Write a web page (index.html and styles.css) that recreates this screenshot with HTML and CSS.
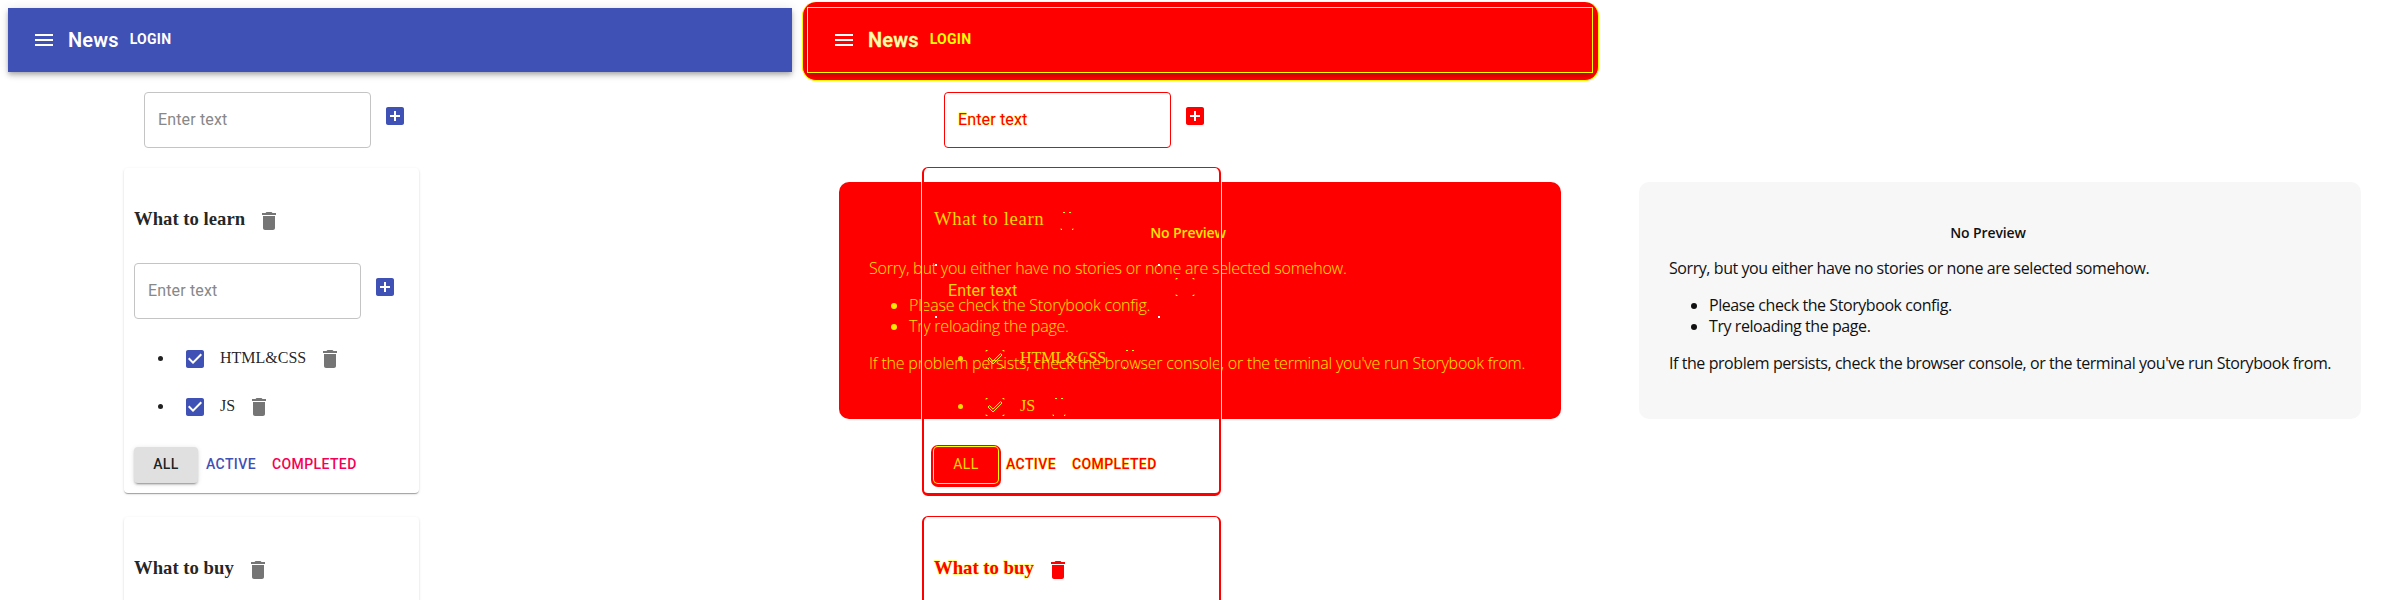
FILE: index.html
```html
<!DOCTYPE html>
<html lang="en">
<head>
<meta charset="utf-8">
<title>Todolists</title>
<link rel="stylesheet" href="styles.css">
</head>
<body>
<svg class="sprite" aria-hidden="true">
  <symbol id="menu" viewBox="0 0 24 24"><path d="M3 18h18v-2H3v2zm0-5h18v-2H3v2zm0-7v2h18V6H3z"/></symbol>
  <symbol id="add" viewBox="0 0 24 24"><path d="M19 3H5c-1.11 0-2 .9-2 2v14c0 1.1.89 2 2 2h14c1.1 0 2-.9 2-2V5c0-1.1-.9-2-2-2zm-2 10h-4v4h-2v-4H7v-2h4V7h2v4h4v2z"/></symbol>
  <symbol id="trash" viewBox="0 0 24 24"><path d="M6 19c0 1.100.9 2 2 2h8c1.100 0 2-.9 2-2V7H6v12zM19 4h-3.500l-1-1h-5l-1 1H5v2h14V4z"/></symbol>
  <symbol id="check" viewBox="0 0 24 24"><path d="M19 3H5c-1.110 0-2 .9-2 2v14c0 1.100.89 2 2 2h14c1.110 0 2-.9 2-2V5c0-1.100-.89-2-2-2zm-9 14l-5-5 1.410-1.410L10 14.170l7.590-7.590L19 8l-9 9z"/></symbol>
  <symbol id="trash-diff" viewBox="0 0 24 24"><path d="M8 3.500h2m4 0h2M6 19.500v1h1m10 0h1v-1"/></symbol>
  <symbol id="add-diff" viewBox="0 0 24 24"><path d="M3 4.500v-1h1.500m15 0H21v1M3 19.500v1h1.500m15 0H21v-1"/></symbol>
  <symbol id="check-diff" viewBox="0 0 24 24"><path d="M3 4.500v-1h1.500m15 0H21v1M3 19.500v1h1.500m15 0H21v-1M10 17l-5-5 1.410-1.410L10 14.170l7.590-7.590L19 8z"/></symbol>
</svg>
<main class="compare">
  <section class="panel">
    <div class="app">
      <header class="bar">
        <span class="icon-btn"><svg><use href="#menu"/></svg></span>
        <span class="title">News</span>
        <span class="btn login">Login</span>
      </header>
      <div class="add-form top-form"><div class="field">Enter text</div><span class="icon-btn primary"><svg><use href="#add"/></svg></span></div>
      <article class="card">
        <h3>What to learn<span class="icon-btn"><svg><use href="#trash"/></svg></span></h3>
        <div class="add-form"><div class="field">Enter text</div><span class="icon-btn primary"><svg><use href="#add"/></svg></span></div>
        <ul class="tasks">
          <li><span class="check primary"><svg><use href="#check"/></svg></span> <span>HTML&amp;CSS</span><span class="icon-btn"><svg><use href="#trash"/></svg></span></li>
          <li><span class="check primary"><svg><use href="#check"/></svg></span> <span>JS</span><span class="icon-btn"><svg><use href="#trash"/></svg></span></li>
        </ul>
        <div class="filters"><span class="btn all">All</span><span class="btn active">Active</span><span class="btn completed">Completed</span></div>
      </article>
      <article class="card">
        <h3>What to buy<span class="icon-btn"><svg><use href="#trash"/></svg></span></h3>
      </article>
    </div>
  </section>

  <section class="panel diff">
    <div class="layer">
      <div class="preview">
        <h1>No Preview</h1>
        <p><span class="sorry">Sorry, but you either have no stories or none are selected somehow.</span></p>
        <ul><li>Please check the Storybook config.</li><li>Try reloading the page.</li></ul>
        <p><span class="persist">If the problem persists, check the browser console, or the terminal you've run Storybook from.</span></p>
      </div>
    </div>
    <div class="app">
      <header class="bar">
        <span class="icon-btn"><svg><use href="#menu"/></svg></span>
        <span class="title">News</span>
        <span class="btn login">Login</span>
      </header>
      <div class="add-form top-form"><div class="field">Enter text</div><span class="icon-btn"><svg><use href="#add"/></svg></span></div>
      <article class="card crossing">
        <h3>What to learn<span class="icon-btn edge"><svg><use href="#trash-diff"/></svg></span></h3>
        <div class="add-form"><div class="field covered">Enter text</div><span class="icon-btn edge"><svg><use href="#add-diff"/></svg></span></div>
        <ul class="tasks">
          <li><span class="check edge"><svg><use href="#check-diff"/></svg></span> <span>HTML&amp;CSS</span><span class="icon-btn edge"><svg><use href="#trash-diff"/></svg></span></li>
          <li><span class="check edge"><svg><use href="#check-diff"/></svg></span> <span>JS</span><span class="icon-btn edge"><svg><use href="#trash-diff"/></svg></span></li>
        </ul>
        <div class="filters"><span class="btn all">All</span><span class="btn active">Active</span><span class="btn completed">Completed</span></div>
      </article>
      <article class="card">
        <h3>What to buy<span class="icon-btn"><svg><use href="#trash"/></svg></span></h3>
      </article>
    </div>
  </section>

  <section class="panel">
    <div class="layer">
      <div class="preview">
        <h1>No Preview</h1>
        <p><span class="sorry">Sorry, but you either have no stories or none are selected somehow.</span></p>
        <ul><li>Please check the Storybook config.</li><li>Try reloading the page.</li></ul>
        <p><span class="persist">If the problem persists, check the browser console, or the terminal you've run Storybook from.</span></p>
      </div>
    </div>
  </section>
</main>
</body>
</html>
```
FILE: styles.css
```css
* { box-sizing: border-box; }
body { margin: 0; background: #fff; overflow: hidden; }
.sprite { display: none; }
.compare { display: grid; grid-template-columns: repeat(3, 800px); height: 600px; overflow: hidden; }
.panel { display: grid; height: 600px; overflow: hidden; }
.panel > * { grid-area: 1 / 1; min-width: 0; }

.app { padding: 8px; font: 16px "Liberation Serif", serif; color: rgba(0, 0, 0, .87); }
.icon-btn { display: inline-block; vertical-align: middle; flex: none; width: 48px; height: 48px; padding: 12px; color: #757575; }
.check { display: inline-block; vertical-align: middle; width: 42px; height: 42px; padding: 9px; }
.icon-btn svg, .check svg { display: block; width: 24px; height: 24px; fill: currentColor; }
.primary { color: #3f51b5; }

.bar {
  display: flex; align-items: center; height: 64px; padding: 0 12px;
  background: #3f51b5; color: #fff;
  box-shadow: 0 2px 4px -1px rgba(0,0,0,.2), 0 4px 5px 0 rgba(0,0,0,.14), 0 1px 10px 0 rgba(0,0,0,.12);
}
.bar .icon-btn { color: #fff; }
.title { font: 600 20px/32px Roboto, sans-serif; letter-spacing: .0075em; }
.btn {
  display: inline-block; min-width: 64px; padding: 5px 8px 7px; border-radius: 4px; text-align: center;
  font: 500 14px/24px Roboto, sans-serif; letter-spacing: .02857em; text-transform: uppercase;
}
.bar .btn { padding: 6px 8px 8px; font-weight: 700; line-height: 22px; letter-spacing: .02em; }

.add-form { display: flex; }
.top-form { margin: 20px 0 20px 136px; }
.field {
  width: 227px; height: 56px; padding: 16.5px 13px 18.5px; border: 1px solid #c4c4c4; border-radius: 4px;
  font: 400 16px/19px Roboto, sans-serif; letter-spacing: .00938em; color: #888;
}

.card {
  position: relative; width: 295px; margin: 0 0 24px 116px; padding: 10px; border-radius: 4px;
  display: flow-root;
  box-shadow: 0 2px 1px -1px rgba(0,0,0,.2), 0 1px 1px 0 rgba(0,0,0,.14), 0 1px 3px 0 rgba(0,0,0,.12);
}
.card h3 { margin: 18.72px 0; font-size: 18.72px; font-weight: 700; line-height: 21px; }
.tasks { margin: 16px 0; padding-left: 40px; }
.tasks li { height: 48px; }
.filters { display: flex; height: 36px; }
.all { background: #e0e0e0; box-shadow: 0 3px 1px -2px rgba(0,0,0,.2), 0 2px 2px 0 rgba(0,0,0,.14), 0 1px 5px 0 rgba(0,0,0,.12); }
.active { color: #3f51b5; }
.completed { color: #f50057; }

.layer { padding: 182px 39px 0; }
.preview {
  height: 237px; padding: 41px 30px 29px; border-radius: 10px; background: #f7f7f7; color: #111;
  font: 400 16px/21px "Open Sans", "Noto Sans", sans-serif; letter-spacing: -.43px; white-space: nowrap;
}
.preview h1 { margin: 0 0 16px; padding-right: 24px; font-size: 14px; font-weight: 600; line-height: 19px; text-align: center; letter-spacing: -.1px; }
.preview p { margin: 0; }
.preview ul { margin: 16px 0; padding-left: 40px; }

/* Changed pixels are red, antialiased edges yellow */
.diff .app { color: #f00; -webkit-text-stroke: .8px #ff0; paint-order: stroke fill; }
.diff .preview { background: #f00; color: #ffe800; font-weight: 300; letter-spacing: -.2px; }
.diff .app { position: relative; z-index: 0; }
.diff .bar { position: relative; background: none; color: #fffbb0; }
.diff .bar::before {
  content: ""; position: absolute; z-index: -1; inset: -6px -7px -9px -6px;
  background: #f00; border-radius: 14px; border: solid #ff0; border-width: 0 1px 1px;
}
.diff .bar::after { content: ""; position: absolute; inset: -1px; border: 1px solid #ff0; }
.diff .bar .icon-btn { color: #fff; }
.diff .icon-btn { color: #f00; }
.diff .edge { color: #ff0; }
.diff .edge svg { fill: none; stroke: currentColor; stroke-width: 1; }
.diff .field { border-color: #f00; color: #f00; }
.diff .crossing h3, .diff .crossing .field, .diff .tasks { color: #ffd800; -webkit-text-stroke: 0; }
.diff .crossing h3 { font-weight: 400; letter-spacing: .035em; }
.diff .crossing h3 .icon-btn { margin-left: -1px; }
.diff .covered {
  border-color: transparent;
  background: linear-gradient(#fff, #fff) 0 0 / 2px 2px no-repeat, linear-gradient(#fff, #fff) 100% 0 / 2px 2px no-repeat,
    linear-gradient(#fff, #fff) 0 100% / 2px 2px no-repeat, linear-gradient(#fff, #fff) 100% 100% / 2px 2px no-repeat;
}
.diff .card { box-shadow: none; }
.diff .card::before {
  content: ""; position: absolute; inset: -1px -2px -3px; border: solid #f00; border-width: 1px 2px 3px; border-radius: 6px;
}
.diff .crossing::after {
  content: ""; position: absolute; top: 14px; left: -3px; right: -3px; height: 237px;
  border: solid #ff0; border-width: 0 1px;
}
.diff .btn { color: #f00; }
.diff .bar .btn { color: #ff0; -webkit-text-stroke: 0; }
.diff .title { -webkit-text-stroke: .3px #ff0; }
.diff .all { background: #f00; color: #ffd800; font-weight: 400; -webkit-text-stroke: 0; box-shadow: 0 0 0 1px #ff0, 0 1px 0 3px #f00; }
```
